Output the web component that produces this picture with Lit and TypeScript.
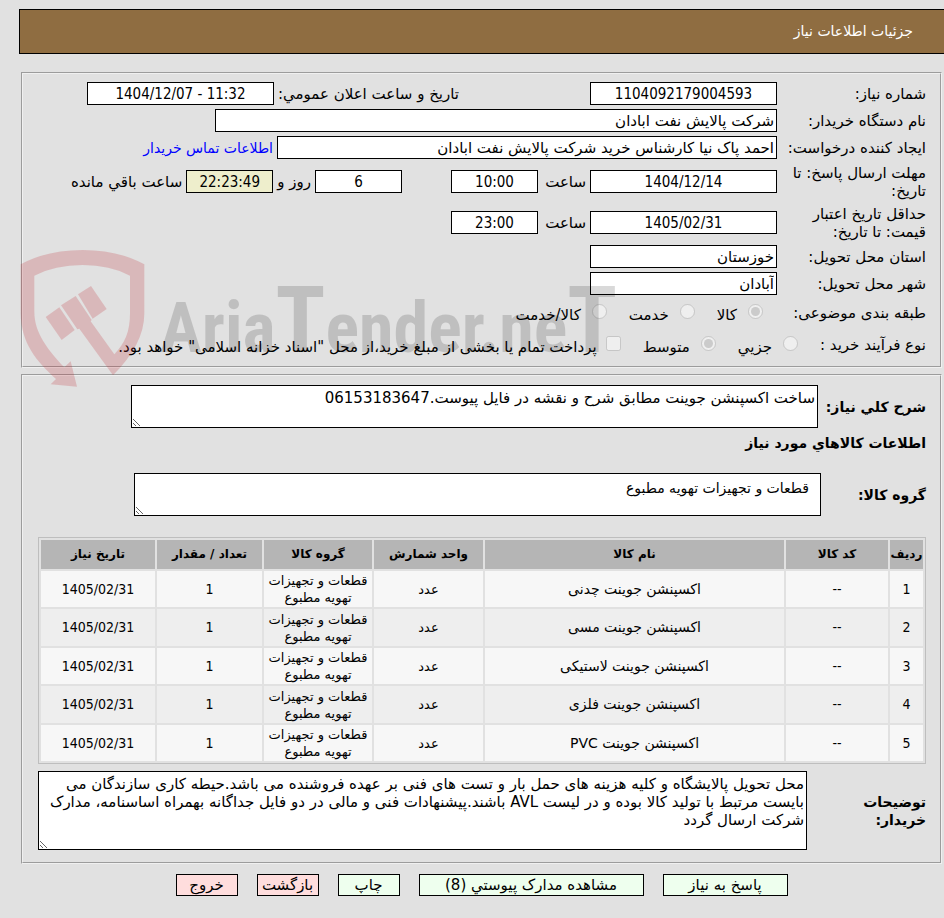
import { LitElement, html, css } from "lit";
import { customElement, property } from "lit/decorators.js";

interface Item {
  name: string;
}

const GROUP = "قطعات و تجهیزات تهویه مطبوع";
const NEED_DATE = "1405/02/31";
const ITEMS: Item[] = [
  { name: "اکسپنشن جوینت چدنی" },
  { name: "اکسپنشن جوینت مسی" },
  { name: "اکسپنشن جوینت لاستیکی" },
  { name: "اکسپنشن جوینت فلزی" },
  { name: "اکسپنشن جوینت PVC" },
];
const NOTES =
  "محل تحویل پالایشگاه و کلیه هزینه های حمل بار و تست های فنی بر عهده فروشنده می باشد.حیطه کاری سازندگان می بایست مرتبط با تولید کالا بوده و در لیست AVL باشند.پیشنهادات فنی و مالی در دو فایل جداگانه بهمراه اساسنامه، مدارک شرکت ارسال گردد";

@customElement("need-watermark")
export class NeedWatermark extends LitElement {
  static styles = css`
    :host {
      display: block;
      pointer-events: none;
    }
    .mark {
      display: block;
      width: 600px;
      height: 140px;
      overflow: visible;
    }
    .shield {
      fill: rgba(190, 40, 50, 0.22);
    }
    .word {
      fill: rgba(0, 0, 0, 0.15);
      font-family: "Liberation Sans Narrow", "Roboto Condensed", "Open Sans Condensed", "DejaVu Sans Condensed", sans-serif;
      font-weight: 700;
      font-size: 210px;
    }
    .tall {
      font-size: 276px;
    }
  `;

  render() {
    return html`
      <svg class="mark" viewBox="60 24 1800 420" direction="ltr" aria-hidden="true">
        <g class="shield">
          <path
            d="M62 73Q140 30 248 30Q355 30 433 73V220C433 285 400 345 339 406L238 266L232 268L183 196L227 168L275 240L272 244L343 343C375 310 390 275 390 220V107Q330 75 248 75Q165 75 103 107V215C103 280 145 330 193 382L212 364L231 440L152 433L168 417C110 365 63 310 62 220Z"
          />
          <path d="M137 231L178 202L224 270L185 300Z" />
          <path d="M234 163L273 138L320 207L278 236Z" />
        </g>
        <text class="word" x="480" y="336">Aria<tspan class="tall">T</tspan>ender.ne<tspan class="tall">T</tspan></text>
      </svg>
    `;
  }
}

@customElement("app-root")
export class AppRoot extends LitElement {
  @property({ type: Array }) items: Item[] = ITEMS;

  static styles = css`
    :host {
      display: block;
      position: relative;
      box-sizing: border-box;
      min-height: 100vh;
      padding: 9px 0 22px;
      direction: rtl;
      background: #e1e1e1;
      color: #000;
      font-family: "DejaVu Sans", sans-serif;
      font-size: 15px;
      line-height: 18px;
    }
    * {
      box-sizing: border-box;
    }
    .title {
      margin: 0 0 18px 19px;
      padding: 0 31px;
      border: 1px solid #000;
      border-right: 0;
      background: #8f6d41;
      color: #fff;
      font-size: 14px;
      font-weight: 400;
      line-height: 43px;
    }
    .panel {
      min-width: 0;
      margin: 0 2px 6px 21px;
      border: 2px groove #f0f0f0;
      padding: 8px 14px 7px 15px;
    }
    .summary {
      display: flex;
      flex-direction: column;
      gap: 4px;
    }
    .row {
      display: flex;
      align-items: center;
      gap: 4px;
      min-height: 23px;
      white-space: nowrap;
    }
    .row.double {
      min-height: 37px;
    }
    .row.choices {
      min-height: 28px;
    }
    .caption {
      flex: none;
      width: 145px;
    }
    .side {
      margin-right: 127px;
    }
    input[type="text"],
    textarea {
      margin: 0;
      border: 1px solid #000;
      border-radius: 0;
      background: #fff;
      color: #000;
      font: inherit;
      outline: 0;
    }
    input[type="text"] {
      height: 23px;
      padding: 0 2px;
      width: 187px;
    }
    .row .mid {
      text-align: center;
      font-family: "DejaVu Sans Condensed", "DejaVu Sans", sans-serif;
    }
    .row .short {
      width: 87px;
    }
    .row .later {
      margin-right: 45px;
    }
    .hour {
      width: 44px;
    }
    .row .wide {
      width: 562px;
    }
    .row .long {
      width: 500px;
    }
    .row .clock {
      background: #eeeecc;
    }
    .contact {
      color: #00f;
      font-size: 14px;
      text-decoration: none;
    }
    .option {
      display: flex;
      align-items: center;
      gap: 11px;
      margin-left: 22px;
      padding-top: 3px;
    }
    .option input {
      width: 15px;
      height: 15px;
      margin: 0 0 6px;
    }
    .option.tight {
      gap: 9px;
      margin-left: 0;
    }
    .kinds {
      display: flex;
      padding-right: 14px;
    }
    .process .caption {
      width: 117px;
    }
    .process .kinds {
      padding-right: 7px;
    }
    .field {
      display: flex;
      align-items: center;
    }
    .strong,
    .heading {
      margin: 0;
      flex: none;
      font-size: 14px;
      font-weight: 700;
    }
    .strong {
      width: 105px;
    }
    .strong.brief-label {
      width: 108px;
    }
    .strong.notes-label {
      width: 119px;
      padding-left: 50px;
    }
    .heading {
      padding: 6px 0 21px;
    }
    textarea {
      display: block;
      flex: 1;
      min-width: 0;
      height: 43px;
      padding: 3px 2px;
      overflow: hidden;
      resize: both;
    }
    .brief {
      margin-left: 93px;
    }
    .group {
      margin-left: 96px;
      padding: 5px 11px;
      font-size: 14px;
    }
    .notes {
      height: 79px;
    }
    .goods {
      width: 100%;
      margin: 21px 0 7px;
      border: 1px solid #bebebe;
      border-spacing: 2px;
      table-layout: fixed;
      text-align: center;
      font-size: 13px;
      line-height: 17px;
    }
    .goods th {
      height: 29px;
      padding: 0;
      background: #b5b5b5;
      font-size: 12px;
    }
    .goods td {
      height: 36px;
      padding: 1px 4px;
      background: #f7f7f7;
    }
    .goods tr:nth-child(even) td {
      height: 37px;
      background: #eee;
    }
    .goods .name {
      font-size: 14px;
    }
    .goods .num {
      font-family: "DejaVu Sans Condensed", "DejaVu Sans", sans-serif;
      font-size: 14px;
    }
    .c-no { width: 33px; }
    .c-code { width: 102px; }
    .c-unit { width: 109px; }
    .c-group { width: 108px; }
    .c-qty { width: 105px; }
    .c-date { width: 114px; }
    .details {
      padding: 9px 14px 12px 15px;
    }
    .actions {
      display: flex;
      justify-content: center;
      gap: 19px;
      margin: 10px 2px 0 21px;
    }
    .actions button {
      width: 62px;
      height: 22px;
      padding: 0;
      border: 1px solid #000;
      border-radius: 0;
      background: #eeffee;
      color: #000;
      font: inherit;
      white-space: nowrap;
    }
    .actions .reply {
      width: 125px;
    }
    .actions .files {
      width: 225px;
    }
    .actions .leave {
      background: #ffdddd;
    }
    .overlay {
      position: absolute;
      left: 20px;
      top: 248px;
      direction: ltr;
    }
  `;

  render() {
    return html`
      <h1 class="title">جزئیات اطلاعات نیاز</h1>

      <fieldset class="panel summary">
        <div class="row">
          <label class="caption" for="no">شماره نیاز:</label>
          <input id="no" class="mid" type="text" readonly value="1104092179004593" />
          <label class="side" for="announce">تاریخ و ساعت اعلان عمومي:</label>
          <input id="announce" class="mid" type="text" dir="ltr" readonly value="1404/12/07 - 11:32" />
        </div>
        <div class="row">
          <label class="caption" for="buyer">نام دستگاه خریدار:</label>
          <input id="buyer" class="wide" type="text" readonly value="شرکت پالایش نفت ابادان" />
        </div>
        <div class="row">
          <label class="caption" for="author">ایجاد کننده درخواست:</label>
          <input id="author" class="long" type="text" readonly value="احمد پاک نیا کارشناس خرید شرکت پالایش نفت ابادان" />
          <a class="contact" href="#contact">اطلاعات تماس خریدار</a>
        </div>
        <div class="row double">
          <label class="caption" for="due">مهلت ارسال پاسخ: تا<br />تاریخ:</label>
          <input id="due" class="mid" type="text" readonly value="1404/12/14" />
          <label class="hour" for="due-time">ساعت</label>
          <input id="due-time" class="mid short" type="text" readonly value="10:00" />
          <input class="mid short later" type="text" readonly value="6" aria-label="روز" />
          <label for="left">روز و</label>
          <input id="left" class="mid short clock" type="text" readonly value="22:23:49" />
          <span>ساعت باقي مانده</span>
        </div>
        <div class="row double">
          <label class="caption" for="valid">حداقل تاریخ اعتبار<br />قیمت: تا تاریخ:</label>
          <input id="valid" class="mid" type="text" readonly value="1405/02/31" />
          <label class="hour" for="valid-time">ساعت</label>
          <input id="valid-time" class="mid short" type="text" readonly value="23:00" />
        </div>
        <div class="row">
          <label class="caption" for="province">استان محل تحویل:</label>
          <input id="province" type="text" readonly value="خوزستان" />
        </div>
        <div class="row">
          <label class="caption" for="city">شهر محل تحویل:</label>
          <input id="city" type="text" readonly value="آبادان" />
        </div>
        <div class="row choices">
          <span class="caption">طبقه بندی موضوعی:</span>
          <div class="kinds">
            <label class="option"><input type="radio" name="kind" disabled checked />کالا</label>
            <label class="option"><input type="radio" name="kind" disabled />خدمت</label>
            <label class="option"><input type="radio" name="kind" disabled />کالا/خدمت</label>
          </div>
        </div>
        <div class="row choices process">
          <span class="caption">نوع فرآیند خرید :</span>
          <div class="kinds">
            <label class="option"><input type="radio" name="process" disabled />جزیي</label>
            <label class="option"><input type="radio" name="process" disabled checked />متوسط</label>
            <label class="option tight"
              ><input type="checkbox" disabled />پرداخت تمام یا بخشی از مبلغ خرید،از محل "اسناد خزانه اسلامی" خواهد بود.</label
            >
          </div>
        </div>
      </fieldset>

      <fieldset class="panel details">
        <div class="field">
          <label class="strong brief-label" for="brief">شرح کلي نیاز:</label>
          <textarea id="brief" class="brief" readonly .value=${"ساخت اکسپنشن جوینت مطابق شرح و نقشه در فایل پیوست.06153183647"}></textarea>
        </div>
        <h2 class="heading">اطلاعات کالاهاي مورد نیاز</h2>
        <div class="field">
          <label class="strong" for="group">گروه کالا:</label>
          <textarea id="group" class="group" readonly .value=${GROUP}></textarea>
        </div>
        <table class="goods">
          <colgroup>
            <col class="c-no" />
            <col class="c-code" />
            <col />
            <col class="c-unit" />
            <col class="c-group" />
            <col class="c-qty" />
            <col class="c-date" />
          </colgroup>
          <thead>
            <tr>
              <th>ردیف</th>
              <th>کد کالا</th>
              <th>نام کالا</th>
              <th>واحد شمارش</th>
              <th>گروه کالا</th>
              <th>تعداد / مقدار</th>
              <th>تاریخ نیاز</th>
            </tr>
          </thead>
          <tbody>
            ${this.items.map(
              (item, i) => html`<tr>
                <td class="num">${i + 1}</td>
                <td class="num">--</td>
                <td class="name">${item.name}</td>
                <td>عدد</td>
                <td>${GROUP}</td>
                <td class="num">1</td>
                <td class="num">${NEED_DATE}</td>
              </tr>`
            )}
          </tbody>
        </table>
        <div class="field">
          <label class="strong notes-label" for="notes">توضیحات خریدار:</label>
          <textarea id="notes" class="notes" readonly .value=${NOTES}></textarea>
        </div>
      </fieldset>

      <div class="actions">
        <button class="reply" type="button">پاسخ به نیاز</button>
        <button class="files" type="button">مشاهده مدارک پیوستي (8)</button>
        <button type="button">چاپ</button>
        <button class="leave" type="button">بازگشت</button>
        <button class="leave" type="button">خروج</button>
      </div>

      <need-watermark class="overlay"></need-watermark>
    `;
  }
}
